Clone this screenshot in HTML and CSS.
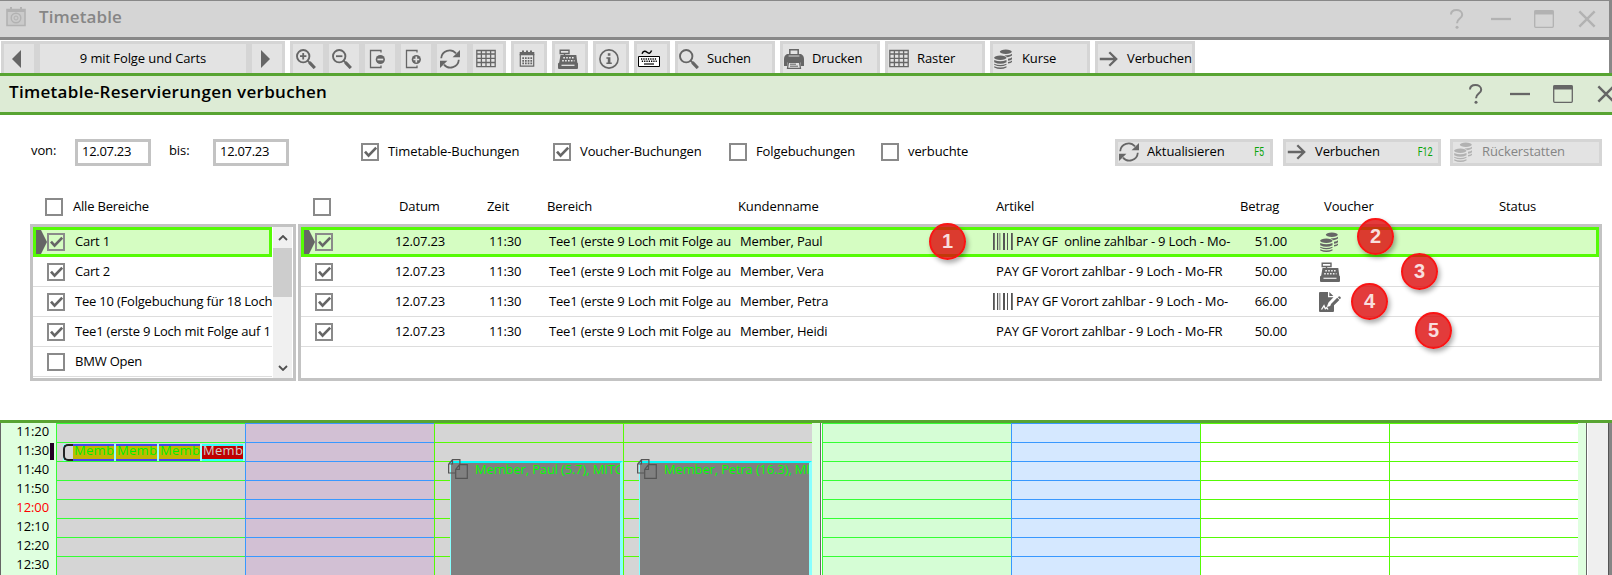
FILE: index.html
```html
<!DOCTYPE html>
<html lang="de">
<head>
<meta charset="utf-8">
<title>Timetable</title>
<link rel="stylesheet" href="styles.css">
</head>
<body>
<svg class="defs" width="0" height="0">
  <symbol id="zoom-in" viewBox="0 0 20 20"><g fill="none" stroke="currentColor"><circle cx="7.2" cy="7.2" r="6.2" stroke-width="1.9"/><path d="M7.2 4v6.4M4 7.2h6.4" stroke-width="1.8"/><path d="M11.6 11.6l2.4 2.4" stroke-width="1.8"/><path d="M13.400 13.400l5.400 5.600" stroke-width="3.200"/></g></symbol>
  <symbol id="zoom-out" viewBox="0 0 20 20"><g fill="none" stroke="currentColor"><circle cx="7.2" cy="7.2" r="6.2" stroke-width="1.9"/><path d="M4 7.2h6.4" stroke-width="1.8"/><path d="M11.6 11.6l2.4 2.4" stroke-width="1.8"/><path d="M13.400 13.400l5.400 5.600" stroke-width="3.200"/></g></symbol>
  <symbol id="search" viewBox="0 0 20 20"><g fill="none" stroke="currentColor"><circle cx="7.2" cy="7.2" r="6.2" stroke-width="1.9"/><path d="M11.6 11.6l2.4 2.4" stroke-width="1.8"/><path d="M13.400 13.400l5.400 5.600" stroke-width="3.200"/></g></symbol>
  <symbol id="page-minus" viewBox="0 0 20 20"><path d="M13 3.5V1.500H2.500v17H13v-2" fill="none" stroke="currentColor" stroke-width="1.300"/><circle cx="12.300" cy="10.500" r="4.600" fill="currentColor"/><path d="M9.400 10.500h5.800" stroke="#e3e3e3" stroke-width="1.700"/></symbol>
  <symbol id="page-plus" viewBox="0 0 20 20"><path d="M13 3.500V1.500H2.500v17H13v-2" fill="none" stroke="currentColor" stroke-width="1.300"/><circle cx="12.300" cy="10.500" r="4.600" fill="currentColor"/><path d="M9.400 10.500h5.800M12.300 7.600v5.800" stroke="#e3e3e3" stroke-width="1.700"/></symbol>
  <symbol id="refresh" viewBox="0 0 20 20"><path d="M1.2 9.200A8.400 8.400 0 0 1 16 4.400M18.800 10.800A8.400 8.400 0 0 1 4 15.600" fill="none" stroke="currentColor" stroke-width="1.800"/><path d="M20 1v7.200h-7.400zM0 19v-7.200h7.400z" fill="currentColor"/></symbol>
  <symbol id="grid" viewBox="0 0 20 20"><path d="M.8 1.500h18.400v16.200H.8zM.8 5h18.400M.8 9.300h18.400M.8 13.500h18.400M5.400 1.500v16.200M10 1.500v16.200M14.600 1.500v16.200" fill="none" stroke="currentColor" stroke-width="1.300"/></symbol>
  <symbol id="calendar" viewBox="0 0 20 20"><path d="M3.300 5v12.200h13.400V5" fill="none" stroke="currentColor" stroke-width="1.200"/><path d="M2.700 3h14.600v3.200H2.700zM5 1.500h2V4H5zM9 1.500h2V4H9zM13 1.500h2V4h-2z" fill="currentColor"/><path d="M5.300 9.200h10M5.300 11.800h10M5.300 14.400h10" stroke="currentColor" stroke-width="1.800" stroke-dasharray="1.700 1"/></symbol>
  <symbol id="register" viewBox="0 0 20 20"><path d="M2.200 1.200h8.800v3.300H2.200zM6.500 4.500V7" fill="none" stroke="currentColor" stroke-width="1.400"/><path d="M2.500 6h15.800l1 7.500.7 1V19q0 1-1 1H1q-1 0-1-1v-4.500l1.200-1z" fill="currentColor"/><path d="M5.300 8.700h11M4.200 11.700h12.300" stroke="#eee" stroke-width="1.500" stroke-dasharray="1.600 1.300"/><path d="M3.500 16.300h13" stroke="#eee" stroke-width="1.200"/></symbol>
  <symbol id="info" viewBox="0 0 20 20"><circle cx="10" cy="10" r="9.100" fill="none" stroke="currentColor" stroke-width="1.600"/><path d="M8.800 4.300h2.600v2.400H8.800zM7.400 8.300h4v5.200h1.400V15H7.400v-1.500h1.400V9.800H7.400z" fill="currentColor"/></symbol>
  <symbol id="keyboard" viewBox="0 0 22 20"><path d="M.5 7.500h21v10H.5z" fill="#fff" stroke="#000"/><path d="M3 10h16M3.800 12.300h15" stroke="#000" stroke-width="1.600" stroke-dasharray="1.300 1"/><path d="M6 15h10" stroke="#000" stroke-width="1.200"/><path d="M4 4.800C5.500 1.500 7.500 2 9 3.300s3 1.800 4.600-1.800" fill="none" stroke="#000" stroke-width="1.500"/></symbol>
  <symbol id="printer" viewBox="0 0 20 20"><path d="M5.800 7V.8h8.400V7" fill="none" stroke="currentColor" stroke-width="1.500"/><path d="M3 5h14q3 1.500 3 5v7h-3.500v-3.500h-13V17H0v-7Q0 6.500 3 5z" fill="currentColor"/><path d="M4.600 7h10.800" stroke="#e3e3e3" stroke-width=".9"/><path d="M4.500 13.500h11L16.500 19.300h-13z" fill="#e3e3e3" stroke="currentColor" stroke-width="1.200"/><path d="M6 15.200h6M6 17.200h8" stroke="currentColor" stroke-width="1"/></symbol>
  <symbol id="coins" viewBox="0 0 20 20"><g fill="currentColor"><ellipse cx="11.800" cy="2.800" rx="6" ry="2.200"/><ellipse cx="6.300" cy="8.700" rx="6.200" ry="2.200"/><path d="M.2 11q6 2.600 12.300 0v2.200q-6 3-12.300 0zM.2 14.700q6 2.600 12.300 0v1q-6 3-12.300 0zM.2 17.200q6 2.600 12.300 0v1.300q-6 3-12.300 0zM10.500 6.400q5.500 0 7.500-1.700v1.900q-1.500 1.300-4.500 1.600zM14 9.700q3-.3 4-1.500v2q-1 1.200-4 1.500zM14 13q3-.3 4-1.500v1.600q-1 1.200-4 1.500z"/></g></symbol>
  <symbol id="arrow" viewBox="0 0 20 20"><path d="M.8 10h16M10.300 3.200l6.900 6.800-6.900 6.800" fill="none" stroke="currentColor" stroke-width="2.300"/></symbol>
  <symbol id="sign" viewBox="0 0 22 20"><path d="M0 1q0-1 1-1h8v5.200h5.500L9.500 10.500 7.700 15l3.600-1 3.700-3.500V19q0 1-1 1H1q-1 0-1-1z" fill="currentColor"/><path d="M10.300 0l4 4h-4z" fill="currentColor"/><path d="M11 15.300l1-3.300 6.200-6.200 2.200 2.200-6.400 6.200zM18.900 5.200l1.100-1q1.500 0 2 1.800l-1.200 1.300z" fill="currentColor"/><path d="M2.500 17.500L5 13.700l1.300 3 1.500-1 1.200 1.800" fill="none" stroke="#fff" stroke-width="1.300"/></symbol>
  <symbol id="barcode" viewBox="0 0 20 17"><path d="M0 0h1.800v17H0zM4 0h1.200v17H4zM6.500 0h.8v17h-.8zM10 0h2v17h-2zM14 0h1v17h-1zM18 0h1.800v17H18z" fill="#555"/></symbol>
  <symbol id="copy" viewBox="0 0 20 20"><path d="M7 14H.6V5.300L4.500.6h7.400V5M4.500.6V5H.6M7.700 10.300L11.500 5.600h7.800v13.800H7.700zM11.500 5.600v4.700H7.700" fill="none" stroke="#555" stroke-width="1.200"/></symbol>
  <symbol id="cal-app" viewBox="0 0 20 20"><path d="M1 2.500h18v16H1z" fill="#cacaca" stroke="currentColor" stroke-width="1.600"/><path d="M1 4h18M5 0v4M15 0v4" stroke="currentColor" stroke-width="2"/><circle cx="10" cy="11" r="4.800" fill="none" stroke="currentColor" stroke-width="1.400"/><circle cx="10" cy="11" r="2" fill="none" stroke="currentColor"/></symbol>
  <symbol id="help" viewBox="0 0 20 20"><path d="M4 5.500C4 2.500 6.500 1 9.500 1s5.700 1.700 5.700 4.700c0 4-5.200 3.800-5.200 8.500" fill="none" stroke="currentColor" stroke-width="2"/><circle cx="10" cy="18.300" r="1.500" fill="currentColor"/></symbol>
  <symbol id="min" viewBox="0 0 20 20"><path d="M0 10h20" stroke="currentColor" stroke-width="2.300"/></symbol>
  <symbol id="max" viewBox="0 0 20 20"><rect x=".7" y="1.700" width="18.600" height="16.600" rx="1" fill="none" stroke="currentColor" stroke-width="1.300"/><path d="M.5 1.500h19v4H.5z" fill="currentColor"/></symbol>
  <symbol id="close" viewBox="0 0 20 20"><path d="M1.500 1.500l17 17M18.500 1.500l-17 17" stroke="currentColor" stroke-width="2.700"/></symbol>
  <symbol id="tick" viewBox="0 0 12 11"><path d="M.9 5.200L4.200 8.800 11.300 1.500" fill="none" stroke="currentColor" stroke-width="2.500"/></symbol>
</svg>

<div class="app">
  <header class="main-title">
    <svg class="app-icon"><use href="#cal-app"/></svg>
    <h1>Timetable</h1>
    <div class="win-ctl"><svg><use href="#help"/></svg><svg><use href="#min"/></svg><svg><use href="#max"/></svg><svg class="x"><use href="#close"/></svg></div>
  </header>

  <div class="toolbar">
    <div class="group nav"><span class="cell"><i class="tri left"></i></span><span class="cell label">9 mit Folge und Carts</span><span class="cell"><i class="tri right"></i></span></div>
    <div class="group"><span class="cell"><svg><use href="#zoom-in"/></svg></span><span class="cell"><svg><use href="#zoom-out"/></svg></span><span class="cell"><svg><use href="#page-minus"/></svg></span><span class="cell"><svg><use href="#page-plus"/></svg></span><span class="cell"><svg><use href="#refresh"/></svg></span><span class="cell"><svg><use href="#grid"/></svg></span></div>
    <div class="group"><span class="cell"><svg><use href="#calendar"/></svg></span></div>
    <div class="group"><span class="cell"><svg><use href="#register"/></svg></span></div>
    <div class="group"><span class="cell"><svg><use href="#info"/></svg></span></div>
    <div class="group"><span class="cell"><svg class="kb"><use href="#keyboard"/></svg></span></div>
    <div class="group"><span class="cell text"><svg><use href="#search"/></svg>Suchen</span></div>
    <div class="group"><span class="cell text"><svg><use href="#printer"/></svg>Drucken</span></div>
    <div class="group"><span class="cell text"><svg><use href="#grid"/></svg>Raster</span></div>
    <div class="group"><span class="cell text"><svg><use href="#coins"/></svg>Kurse</span></div>
    <div class="group"><span class="cell text"><svg><use href="#arrow"/></svg>Verbuchen</span></div>
  </div>

  <section class="dialog">
    <header class="dialog-title">
      <h2>Timetable-Reservierungen verbuchen</h2>
      <div class="win-ctl"><svg><use href="#help"/></svg><svg><use href="#min"/></svg><svg><use href="#max"/></svg><svg class="x"><use href="#close"/></svg></div>
    </header>
    <div class="filters">
      <label class="von">von:</label><span class="field">12.07.23</span>
      <label class="bis">bis:</label><span class="field">12.07.23</span>
      <span class="opt o1"><i class="cb"><svg><use href="#tick"/></svg></i>Timetable-Buchungen</span>
      <span class="opt o2"><i class="cb"><svg><use href="#tick"/></svg></i>Voucher-Buchungen</span>
      <span class="opt o3"><i class="cb"></i>Folgebuchungen</span>
      <span class="opt o4"><i class="cb"></i>verbuchte</span>
      <div class="actions">
        <button class="btn"><svg><use href="#refresh"/></svg>Aktualisieren<kbd>F5</kbd></button>
        <button class="btn"><svg><use href="#arrow"/></svg>Verbuchen<kbd>F12</kbd></button>
        <button class="btn off"><svg><use href="#coins"/></svg>Rückerstatten</button>
      </div>
    </div>

    <div class="panels">
      <div class="areas">
        <div class="head"><i class="cb"></i>Alle Bereiche</div>
        <div class="box">
          <div class="list">
            <div class="item sel"><i class="cb"><svg><use href="#tick"/></svg></i><span>Cart 1</span></div>
            <div class="item"><i class="cb"><svg><use href="#tick"/></svg></i><span>Cart 2</span></div>
            <div class="item"><i class="cb"><svg><use href="#tick"/></svg></i><span>Tee 10 (Folgebuchung für 18 Loch</span></div>
            <div class="item"><i class="cb"><svg><use href="#tick"/></svg></i><span>Tee1 (erste 9 Loch mit Folge auf 1</span></div>
            <div class="item"><i class="cb"></i><span>BMW Open</span></div>
          </div>
          <div class="scroll"><svg viewBox="0 0 10 6"><path d="M1 5l4-4 4 4"/></svg><i class="thumb"></i><svg viewBox="0 0 10 6"><path d="M1 1l4 4 4-4"/></svg></div>
        </div>
      </div>
      <div class="bookings">
        <div class="head row"><i class="cb"></i><span class="h-date">Datum</span><span>Zeit</span><span>Bereich</span><span>Kundenname</span><span class="h-art">Artikel</span><span class="h-sum">Betrag</span><span class="h-vou">Voucher</span><span>Status</span></div>
        <div class="box rows">
          <div class="item row sel"><i class="cb"><svg><use href="#tick"/></svg></i><span>12.07.23</span><span>11:30</span><span class="area">Tee1 (erste 9 Loch mit Folge au</span><span>Member, Paul</span><span class="art code"><svg><use href="#barcode"/></svg>PAY GF&nbsp; online zahlbar - 9 Loch - Mo-</span><span class="sum">51.00</span><span class="vou"><svg><use href="#coins"/></svg></span></div>
          <div class="item row"><i class="cb"><svg><use href="#tick"/></svg></i><span>12.07.23</span><span>11:30</span><span class="area">Tee1 (erste 9 Loch mit Folge au</span><span>Member, Vera</span><span class="art">PAY GF Vorort zahlbar - 9 Loch - Mo-FR</span><span class="sum">50.00</span><span class="vou"><svg><use href="#register"/></svg></span></div>
          <div class="item row"><i class="cb"><svg><use href="#tick"/></svg></i><span>12.07.23</span><span>11:30</span><span class="area">Tee1 (erste 9 Loch mit Folge au</span><span>Member, Petra</span><span class="art code"><svg><use href="#barcode"/></svg>PAY GF Vorort zahlbar - 9 Loch - Mo-</span><span class="sum">66.00</span><span class="vou"><svg class="wide"><use href="#sign"/></svg></span></div>
          <div class="item row"><i class="cb"><svg><use href="#tick"/></svg></i><span>12.07.23</span><span>11:30</span><span class="area">Tee1 (erste 9 Loch mit Folge au</span><span>Member, Heidi</span><span class="art">PAY GF Vorort zahlbar - 9 Loch - Mo-FR</span><span class="sum">50.00</span><span class="vou"></span></div>
        </div>
      </div>
    </div>
    <b class="badge b1">1</b><b class="badge b2">2</b><b class="badge b3">3</b><b class="badge b4">4</b><b class="badge b5">5</b>
  </section>

  <main class="timetable">
    <div class="times"><span>11:20</span><span class="now">11:30</span><span>11:40</span><span>11:50</span><span class="noon">12:00</span><span>12:10</span><span>12:20</span><span>12:30</span></div>
    <div class="lane grey"></div>
    <div class="lane mauve blue"></div>
    <div class="lane grey lime"></div>
    <div class="lane grey lime"></div>
    <div class="edge first"></div>
    <div class="lane mint"></div>
    <div class="lane sky blue"></div>
    <div class="lane lime"></div>
    <div class="lane lime"></div>
    <div class="edge"></div>
    <div class="vscroll"></div>
    <div class="party"><i class="bracket"></i><span>Memb</span><span>Memb</span><span>Memb</span><span class="red">Memb</span></div>
    <div class="block paul"><svg><use href="#copy"/></svg><span>Member, Paul (5.7), MITG</span></div>
    <div class="block petra"><svg><use href="#copy"/></svg><span>Member, Petra (16.3), MI</span></div>
  </main>
</div>
</body>
</html>
```
FILE: styles.css
```css
* { box-sizing: border-box; }
body { margin: 0; background: #fff; font: 13px/18px "Open Sans", "Noto Sans", sans-serif; letter-spacing: -.1px; color: #000; }
svg { display: block; width: 20px; height: 20px; color: #666; flex: none; }
.defs { position: absolute; width: 0; height: 0; }
h1, h2 { margin: 0; font-size: 17px; font-weight: 600; line-height: 22px; white-space: nowrap; letter-spacing: .3px; }
i { font-style: normal; }
.app { width: 1612px; height: 575px; overflow: hidden; }

.main-title { display: flex; height: 40px; background: #d5d5d5; border: solid #888; border-width: 1px 3px 3px 0; padding: 5px 13px 0 6px; }
.main-title .app-icon { margin-top: 1px; color: #b2b2b2; }
.main-title h1 { margin-left: 13px; color: #868686; letter-spacing: .1px; }
.win-ctl { display: flex; margin-left: auto; gap: 24px; }
.win-ctl svg:nth-child(2) { margin-right: -1px; }
.main-title svg { color: #b2b2b2; }
.main-title .win-ctl { padding-top: 3px; }
.win-ctl .x { width: 18px; height: 18px; margin-top: 1px; }

.toolbar { display: flex; height: 33px; padding: 1px 0 0 1px; gap: 5px; border-right: 3px solid #888; overflow: hidden; }
.group { display: flex; gap: 6px; height: 40px; padding: 3px; background: #d5d5d5; }
.cell { display: flex; width: 30px; padding: 5px 0 0 3px; background: #e3e3e3; white-space: nowrap; }
.cell.text { width: 94px; padding-left: 1px; gap: 8px; line-height: 18px; }
.cell .kb { width: 22px; margin-left: -2px; }
.cell.label { width: 206px; justify-content: center; padding: 5px 0 0; }
.nav .tri { height: 18px; margin-top: 1px; border: solid transparent; border-width: 9px 0; }
.nav .left { border-right: 9px solid #666; margin-left: 5px; }
.nav .right { border-left: 9px solid #666; margin-left: 6px; }

.dialog { position: relative; height: 350px; background: #fff; border: solid #58a432; border-width: 3px 0; }
.dialog-title { display: flex; height: 39px; padding: 5px 0 0 9px; background: #ddebd5; border-bottom: 3px solid #58a432; }
.dialog-title .win-ctl { padding-top: 3px; margin-right: -3px; }
.filters { display: flex; height: 51px; padding: 24px 10px 0 31px; line-height: 22px; white-space: nowrap; }
.von { width: 44px; }
.bis { width: 44px; margin-left: 18px; }
.field { width: 76px; height: 27px; border: 3px solid #c3c3c3; padding: 0 4px; line-height: 18px; letter-spacing: -.3px; }
.opt { display: flex; gap: 9px; padding-top: 4px; height: 22px; line-height: 16px; }
.o1 { width: 192px; margin-left: 72px; }
.o2 { width: 176px; }
.o3 { width: 152px; }
.cb { display: flex; align-items: center; justify-content: center; flex: none; width: 18px; height: 18px; border: 2px solid #8a8a8a; background: #fff; }
.cb svg { width: 13px; height: 12px; }
.sel .cb { background: transparent; }
.actions { display: flex; margin-left: auto; }
.btn { display: flex; width: 158px; height: 27px; margin: 0 10px 0 0; padding: 0 6px 0 1px; border: 3px solid #d5d5d5; background: #e3e3e3; font: inherit; letter-spacing: inherit; line-height: 18px; color: #000; gap: 8px; }
.btn + .btn + .btn { width: 152px; margin: 0 0 0 -1px; }
.btn kbd { margin-left: auto; font: 12px/20px Roboto, sans-serif; letter-spacing: -.3px; color: #0aa50a; transform: scaleX(.75); transform-origin: right; }
.btn.off { color: #858585; }
.off svg { color: #b2b2b2; }

.panels { display: flex; gap: 2px; padding: 30px 0 0 30px; white-space: nowrap; }
.areas { width: 266px; }
.areas .head { display: flex; gap: 10px; padding: 2px 0 0 15px; height: 28px; line-height: 16px; letter-spacing: -.2px; }
.box { display: flex; height: 157px; border: 3px solid #c3c3c3; }
.list { width: 239px; }
.item { display: flex; align-items: center; height: 30px; border-bottom: 1px solid #ddd; padding-left: 14px; letter-spacing: -.18px; line-height: 18px; }
.item > span { margin-top: -2px; }
.list .item span { margin-left: 10px; letter-spacing: -.21px; }
.item.sel { border: 3px solid #55fb05; background: #d5fdc2; padding-left: 11px; position: relative; }
.item.sel::before { content: ""; position: absolute; left: 0; top: 0; width: 11px; height: 24px; background: #666; clip-path: polygon(0 0, 5px 0, 11px 12px, 5px 24px, 0 24px); }
.scroll { width: 19px; margin-left: 1px; background: #f0f0f0; display: flex; flex-direction: column; align-items: center; }
.scroll svg { width: 10px; height: 6px; margin: 8px 0 7px; }
.scroll path { fill: none; stroke: #505050; stroke-width: 1.8; }
.scroll svg:last-child { margin-top: auto; }
.thumb { width: 19px; height: 49px; background: #cdcdcd; }
.bookings { width: 1304px; }
.row { display: grid; grid-template-columns: 80px 94px 60px 191px 253px 244px 84px 180px 1fr; align-items: center; }
.bookings .head { height: 28px; padding: 2px 0 8px 15px; }
.head.row span { margin-top: -2px; }
.h-date { padding-left: 6px; }
.h-art { padding-left: 5px; }
.h-sum { padding-left: 5px; }
.h-vou { padding-left: 5px; }
.rows { display: block; }
.rows .row { padding-left: 14px; }
.rows .row.sel { padding-left: 11px; }
.area { width: 183px; }
.art { padding-left: 3px; }
.art.code { display: flex; gap: 3px; padding: 0; }
.art svg { height: 17px; margin-top: 1px; }
.sum { width: 50px; text-align: right; }
.vou svg { margin: 2px 0 0 -1px; }
.vou .wide { width: 22px; margin-left: -2px; }
.badge { position: absolute; width: 37px; height: 37px; border: 2px solid #fa1414; border-radius: 50%; background: #dc0a0acc; color: #f8dede; font: bold 20px/33px "Liberation Sans", sans-serif; text-align: center; box-shadow: 2px 3px 5px #0005; }
.b1 { left: 929px; top: 147px; }
.b2 { left: 1357px; top: 142px; }
.b3 { left: 1401px; top: 177px; }
.b4 { left: 1351px; top: 207px; }
.b5 { left: 1415px; top: 236px; }

.timetable { --line: #3f3; display: flex; position: relative; height: 152px; background: #fff; border-left: 1px solid #666; border-right: 3px solid #858585; }
.timetable > * { flex: none; }
.times { display: flex; flex-direction: column; width: 55px; padding-right: 7px; background: #dfffdf; text-align: right; }
.times span { height: 19px; line-height: 16px; }
.times .now { border-right: 4px solid #202; padding-right: 1px; height: 17px; margin: 1px -5px 1px 0; line-height: 14px; }
.noon { color: #f00; }
.lane { width: 189px; border-left: 1px solid var(--line); background-image: repeating-linear-gradient(var(--line) 0 1px, transparent 1px 19px); }
.grey { background-color: #d5d5d5; }
.mauve { background-color: #d2c0d4; }
.mint { background-color: #d5fdd5; }
.sky { background-color: #d5e8ff; }
.blue { --line: #3898ff; }
.lime { --line: #55fb05; }
.edge { width: 9px; background: #dfffdf; border-right: 1px solid #666; }
.edge.first { margin-right: 1px; }
.vscroll { width: 22px; border-right: 1px solid #555; border-left: 1px solid #fff; background: #efefef; }
.party { position: absolute; left: 62px; top: 21px; display: flex; width: 182px; height: 17px; gap: 2px; background: #9ff; color: #0e0; }
.party span { width: 41px; height: 17px; overflow: hidden; background: #bfb800; border: solid #44e; border-width: 2px 0; line-height: 9px; padding-left: 1px; letter-spacing: .3px; }
.party .red { background: #c00000; color: #ccc; border-color: #3ff; }
.bracket { width: 10px; margin-right: -2px; border: 2px solid #222; border-right: 0; border-radius: 5px 0 0 5px; background: #d5d5d5; }
.block { position: absolute; top: 38px; width: 173px; height: 120px; padding-left: 24px; background: #808080; border: solid #8ff; border-width: 2px 3px 0 1px; border-top-color: #0ff; color: #0f0; white-space: nowrap; line-height: 12px; letter-spacing: -.15px; }
.block span { display: block; overflow: hidden; height: 18px; }
.block svg { position: absolute; left: -3px; top: -4px; }
.paul { left: 449px; }
.petra { left: 638px; }
```
